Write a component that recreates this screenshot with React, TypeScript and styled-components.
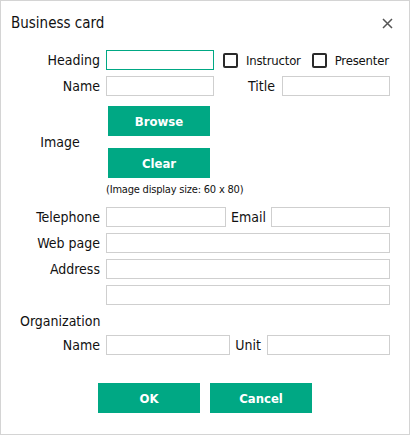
import styled, { createGlobalStyle } from 'styled-components'

const GlobalStyle = createGlobalStyle`
  body {
    margin: 0;
    background: #fff;
  }
`

const GREEN = '#00a884'

const Dialog = styled.div`
  width: 410px;
  height: 435px;
  box-sizing: border-box;
  border: 1px solid #d4d4d4;
  background: #fff;
  color: #111;
  font-family: 'DejaVu Sans Condensed', 'DejaVu Sans', sans-serif;
  font-stretch: semi-condensed;
  font-size: 14px;
`

const Header = styled.div`
  height: 44px;
  display: flex;
  align-items: center;
  justify-content: space-between;
  padding: 0 16px 0 10px;
`

const Title = styled.div`
  font-size: 15px;
`

const CloseButton = styled.button`
  appearance: none;
  border: none;
  background: none;
  padding: 0;
  width: 11px;
  height: 11px;
  display: flex;
  cursor: pointer;
`

const Row = styled.div<{ $top: number }>`
  display: grid;
  grid-template-columns: 80px 1fr;
  column-gap: 6px;
  padding: 0 19px;
  margin-top: ${(p) => p.$top}px;
  align-items: center;
`

const Label = styled.label<{ $align?: 'left' | 'center' | 'right' }>`
  text-align: ${(p) => p.$align || 'right'};
  white-space: nowrap;
  line-height: 20px;
`

const Fields = styled.div`
  display: flex;
  align-items: center;
  height: 20px;
`

const TextInput = styled.input<{ $width?: number; $active?: boolean }>`
  box-sizing: border-box;
  height: 20px;
  width: ${(p) => (p.$width ? `${p.$width}px` : '100%')};
  flex: none;
  margin: 0;
  padding: 0 4px;
  border: 1px solid ${(p) => (p.$active ? GREEN : '#cfcfcf')};
  border-radius: 0;
  outline: none;
  font: inherit;
`

const InlineLabel = styled.label<{ $pad: number }>`
  flex: 1;
  text-align: right;
  padding-right: ${(p) => p.$pad}px;
  white-space: nowrap;
`

const CheckItem = styled.label<{ $left: number }>`
  display: flex;
  align-items: center;
  gap: 8px;
  margin-left: ${(p) => p.$left}px;
  font-size: 13px;
  letter-spacing: -0.2px;
  white-space: nowrap;
`

const CheckBox = styled.input`
  appearance: none;
  margin: 0;
  width: 15px;
  height: 15px;
  box-sizing: border-box;
  border: 2px solid #2a2a2a;
  border-radius: 2px;
  background: #fff;
`

const ButtonStack = styled.div`
  display: flex;
  flex-direction: column;
  gap: 12px;
  margin-left: 2px;
`

const GreenButton = styled.button`
  appearance: none;
  width: 102px;
  height: 30px;
  border: none;
  border-radius: 0;
  background: ${GREEN};
  color: #fff;
  font-family: 'DejaVu Sans Condensed', 'DejaVu Sans', sans-serif;
  font-stretch: semi-condensed;
  font-weight: bold;
  font-size: 13px;
  cursor: pointer;
`

const Note = styled.div`
  font-size: 11px;
  letter-spacing: -0.2px;
  line-height: 14px;
  margin-top: 5px;
  padding-left: 105px;
`

const Footer = styled.div`
  display: flex;
  justify-content: center;
  gap: 10px;
  margin-top: 28px;
`

export default function App() {
  return (
    <>
      <GlobalStyle />
      <Dialog>
        <Header>
          <Title>Business card</Title>
          <CloseButton aria-label="Close">
            <svg width="11" height="11" viewBox="0 0 11 11">
              <path d="M1 1 L10 10 M10 1 L1 10" stroke="#555" strokeWidth="1.5" />
            </svg>
          </CloseButton>
        </Header>

        <Row $top={5}>
          <Label>Heading</Label>
          <Fields>
            <TextInput $width={108} $active />
            <CheckItem $left={9}>
              <CheckBox type="checkbox" />
              Instructor
            </CheckItem>
            <CheckItem $left={11}>
              <CheckBox type="checkbox" />
              Presenter
            </CheckItem>
          </Fields>
        </Row>

        <Row $top={6}>
          <Label>Name</Label>
          <Fields>
            <TextInput $width={108} />
            <InlineLabel $pad={7}>Title</InlineLabel>
            <TextInput $width={108} />
          </Fields>
        </Row>

        <Row $top={10}>
          <Label $align="center">Image</Label>
          <ButtonStack>
            <GreenButton>Browse</GreenButton>
            <GreenButton>Clear</GreenButton>
          </ButtonStack>
        </Row>

        <Note>(Image display size: 60 x 80)</Note>

        <Row $top={10}>
          <Label>Telephone</Label>
          <Fields>
            <TextInput $width={120} />
            <InlineLabel $pad={5}>Email</InlineLabel>
            <TextInput $width={119} />
          </Fields>
        </Row>

        <Row $top={6}>
          <Label>Web page</Label>
          <TextInput />
        </Row>

        <Row $top={6}>
          <Label>Address</Label>
          <TextInput />
        </Row>

        <Row $top={6}>
          <span />
          <TextInput />
        </Row>

        <Row $top={6}>
          <Label $align="left">Organization</Label>
        </Row>

        <Row $top={4}>
          <Label>Name</Label>
          <Fields>
            <TextInput $width={124} />
            <InlineLabel $pad={6}>Unit</InlineLabel>
            <TextInput $width={123} />
          </Fields>
        </Row>

        <Footer>
          <GreenButton>OK</GreenButton>
          <GreenButton>Cancel</GreenButton>
        </Footer>
      </Dialog>
    </>
  )
}
